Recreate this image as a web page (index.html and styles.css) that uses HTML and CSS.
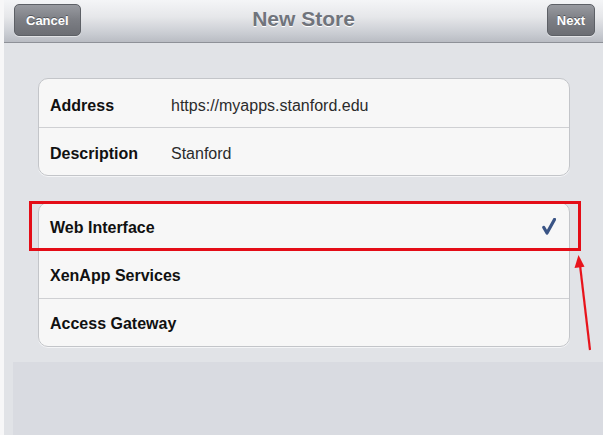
FILE: index.html
```html
<!DOCTYPE html>
<html>
<head>
<meta charset="utf-8">
<link rel="stylesheet" href="styles.css">
</head>
<body>
<div class="edge"></div>
<div class="screen">
  <header class="navbar">
    <button class="navbtn">Cancel</button>
    <div class="title">New Store</div>
    <button class="navbtn">Next</button>
  </header>
  <main class="content">
    <section class="group group-fields">
      <div class="row"><span class="label">Address</span><span class="value">https://myapps.stanford.edu</span></div>
      <div class="row"><span class="label">Description</span><span class="value">Stanford</span></div>
    </section>
    <section class="group group-choices">
      <div class="row"><span class="label">Web Interface</span>
        <svg class="check" width="14" height="17" viewBox="0 0 14 17"><path d="M1.8 9.5 L5 15 L12.5 1.5" fill="none" stroke="#3a5485" stroke-width="3.2" stroke-linecap="round" stroke-linejoin="round"/></svg>
      </div>
      <div class="row"><span class="label">XenApp Services</span></div>
      <div class="row"><span class="label">Access Gateway</span></div>
      <div class="highlight"></div>
      <svg class="arrow" width="24" height="100" viewBox="0 0 24 100"><line x1="18" y1="97" x2="8" y2="12" stroke="#e8141c" stroke-width="2.2"/><path d="M6.5 2 L2.5 15 L12.5 13.8 Z" fill="#e8141c"/></svg>
    </section>
    <div class="keyboard"></div>
  </main>
</div>
</body>
</html>
```
FILE: styles.css
```css
html, body {
  margin: 0;
  height: 100%;
}
body {
  display: flex;
  font-family: "Liberation Sans", Arial, sans-serif;
  background: #ffffff;
  overflow: hidden;
}
.edge {
  width: 4px;
  background: #f7f7f8;
}
.screen {
  flex: 1;
  display: flex;
  flex-direction: column;
  background: #e1e3e7;
}
.navbar {
  height: 43px;
  box-sizing: border-box;
  padding: 4px 8px 0 8px;
  display: flex;
  justify-content: space-between;
  align-items: flex-start;
  background: linear-gradient(#f4f5f7 0%, #e6e7ea 40%, #c9ccd2 80%, #b9bcc3 100%);
  border-bottom: 1px solid #8e9198;
  position: relative;
}
.navbtn {
  height: 32px;
  padding: 0 10px;
  border: 1px solid #5d6066;
  border-radius: 5px;
  background: linear-gradient(#989aa0 0%, #7c7e84 50%, #6c6e74 100%);
  color: #ffffff;
  font: bold 13px "Liberation Sans", Arial, sans-serif;
  text-shadow: 0 -1px 0 #55575c;
  box-shadow: 0 1px 0 rgba(255,255,255,0.5);
}
.navbtn:first-child {
  margin-left: 2px;
  padding: 0 11px;
}
.navbtn:last-child {
  padding: 0 9px;
}
.title {
  position: absolute;
  left: 0;
  right: 0;
  top: 7px;
  text-align: center;
  font-weight: bold;
  font-size: 21px;
  color: #70747c;
  text-shadow: 0 1px 0 #ffffff;
  pointer-events: none;
}
.content {
  flex: 1;
  display: flex;
  flex-direction: column;
  padding: 35px 33px 0 34px;
}
.group {
  background: #f7f7f7;
  border: 1px solid #c3c5c9;
  border-radius: 10px;
  display: flex;
  flex-direction: column;
  box-shadow: 0 1px 0 #f4f5f7;
}
.group-choices {
  margin-top: 26px;
  position: relative;
}
.row {
  height: 48px;
  box-sizing: border-box;
  padding: 3px 13px 0 11px;
  display: flex;
  align-items: center;
  border-top: 1px solid #cfd0d3;
  font-size: 16px;
  color: #1a1a1a;
}
.row:first-child {
  border-top: none;
  height: 47px;
}
.group-fields .row {
  height: 48px;
  padding-top: 5px;
}
.label {
  font-weight: bold;
  flex: 0 0 auto;
  min-width: 121px;
  color: #111111;
}
.value {
  color: #2b2b2b;
}
.check {
  margin-left: auto;
  margin-top: -3px;
}
.highlight {
  position: absolute;
  left: -10px;
  top: -2px;
  width: 546px;
  height: 44px;
  border: 3px solid #e40d17;
}
.arrow {
  position: absolute;
  left: 533px;
  top: 50px;
}
.keyboard {
  flex: 1;
  margin: 15px -33px 0 -25px;
  background: #d9dbe1;
}
```
